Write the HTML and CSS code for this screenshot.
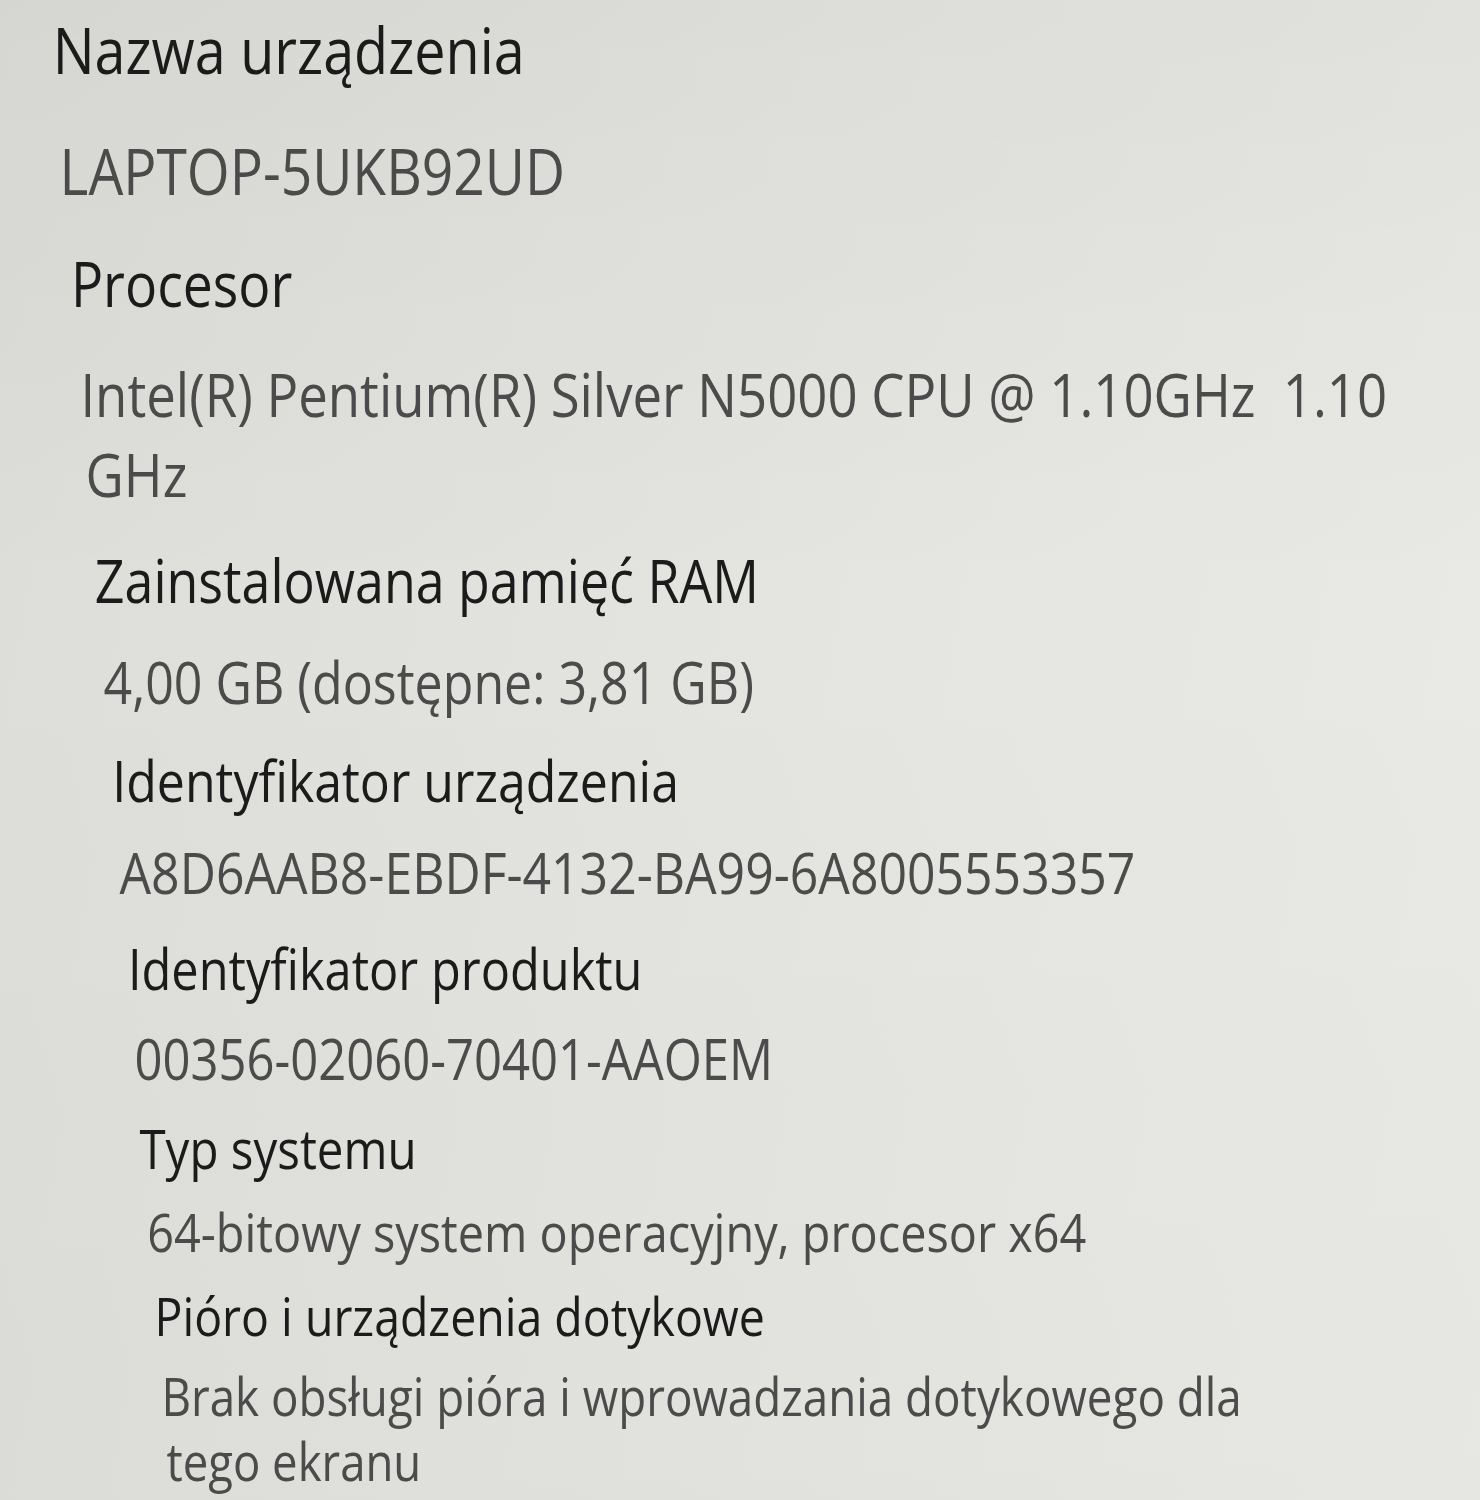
FILE: index.html
```html
<!DOCTYPE html>
<html lang="pl">
<head>
<meta charset="utf-8">
<title>Specyfikacja urządzenia</title>
<link rel="stylesheet" href="styles.css">
</head>
<body>
<main class="specs">
  <section class="field">
    <div class="line label r1">Nazwa urządzenia</div>
    <div class="line value r2">LAPTOP-5UKB92UD</div>
  </section>
  <section class="field">
    <div class="line label r3">Procesor</div>
    <div class="line value r4">Intel(R) Pentium(R) Silver N5000 CPU @ 1.10GHz  1.10</div>
    <div class="line value r4b">GHz</div>
  </section>
  <section class="field">
    <div class="line label r5">Zainstalowana pamięć RAM</div>
    <div class="line value r6">4,00 GB (dostępne: 3,81 GB)</div>
  </section>
  <section class="field">
    <div class="line label r7">Identyfikator urządzenia</div>
    <div class="line value r8">A8D6AAB8-EBDF-4132-BA99-6A8005553357</div>
  </section>
  <section class="field">
    <div class="line label r9">Identyfikator produktu</div>
    <div class="line value r10">00356-02060-70401-AAOEM</div>
  </section>
  <section class="field">
    <div class="line label r11">Typ systemu</div>
    <div class="line value r12">64-bitowy system operacyjny, procesor x64</div>
  </section>
  <section class="field">
    <div class="line label r13">Pióro i urządzenia dotykowe</div>
    <div class="line value r14">Brak obsługi pióra i wprowadzania dotykowego dla</div>
    <div class="line value r14b">tego ekranu</div>
  </section>
</main>
</body>
</html>
```

FILE: styles.css
```css
html, body {
  margin: 0;
  padding: 0;
}

body {
  width: 1480px;
  height: 1500px;
  overflow: hidden;
  background:
    linear-gradient(180deg, rgba(0, 0, 0, 0.03) 0%, rgba(0, 0, 0, 0) 40%, rgba(0, 0, 0, 0.015) 100%),
    linear-gradient(100deg, #dcddd8 0%, #e3e4df 45%, #eaebe7 100%);
  font-family: "Open Sans", "Noto Sans", "DejaVu Sans", sans-serif;
}

.specs {
  width: 1600px;
  padding-top: 18px;
  transform: scaleX(0.87);
  transform-origin: 0 0;
}

.field {
  display: block;
}

.line {
  display: block;
  line-height: 1;
  white-space: pre;
  font-weight: 400;
}

.label {
  color: #1a1b1a;
}

.value {
  color: #4a4b4a;
}

.r1   { font-size: 64px;   margin-left: 60.5px; }
.r2   { font-size: 63.4px; margin-left: 68.5px; margin-top: 57px; }
.r3   { font-size: 61.5px; margin-left: 81.5px; margin-top: 51px; }
.r4   { font-size: 60.6px; margin-left: 92.4px; margin-top: 49.5px; }
.r4b  { font-size: 60.5px; margin-left: 98.4px; margin-top: 19px; }
.r5   { font-size: 59.7px; margin-left: 109px;  margin-top: 45px; }
.r6   { font-size: 57.6px; margin-left: 119px;  margin-top: 44px; }
.r7   { font-size: 57.5px; margin-left: 129px;  margin-top: 41px; }
.r8   { font-size: 57.4px; margin-left: 137.4px; margin-top: 35px; }
.r9   { font-size: 56px;   margin-left: 147px;  margin-top: 38px; }
.r10  { font-size: 56.3px; margin-left: 154.5px; margin-top: 34px; }
.r11  { font-size: 54.6px; margin-left: 160.3px; margin-top: 35px; }
.r12  { font-size: 53.8px; margin-left: 169.3px; margin-top: 29px; }
.r13  { font-size: 53.4px; margin-left: 177.6px; margin-top: 31px; }
.r14  { font-size: 52.6px; margin-left: 185.5px; margin-top: 27px; }
.r14b { font-size: 52.3px; margin-left: 191.3px; margin-top: 13px; }
```
